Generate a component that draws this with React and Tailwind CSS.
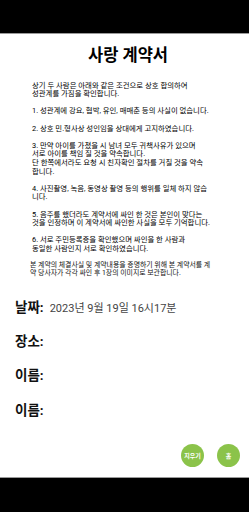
const FONT = { fontFamily: 'Roboto, "Noto Sans CJK KR", sans-serif' }

// each paragraph is a list of lines, broken where the screenshot breaks them
const CLAUSES = [
  ['상기 두 사람은 아래와 같은 조건으로 상호 합의하여', '성관계를 가짐을 확인합니다.'],
  ['1. 성관계에 강요, 협박, 유인, 매매춘 등의 사실이 없습니다.'],
  ['2. 상호 민.형사상 성인임을 상대에게 고지하였습니다.'],
  [
    '3. 만약 아이를 가졌을 시 남녀 모두 귀책사유가 있으며',
    '서로 아이를 책임 질 것을 약속합니다.',
    '단 한쪽에서라도 요청 시 친자확인 절차를 거칠 것을 약속',
    '합니다.',
  ],
  ['4. 사진촬영, 녹음, 동영상 촬영 등의 행위를 일체 하지 않습', '니다.'],
  ['5. 음주를 했더라도 계약서에 싸인 한 것은 본인이 맞다는', '것을 인정하며 이 계약서에 싸인한 사실을 모두 기억합니다.'],
  ['6. 서로 주민등록증을 확인했으며 싸인을 한 사람과', '동일한 사람인지 서로 확인하였습니다.'],
]

const NOTE = [
  '본 계약의 체결사실 및 계약내용을 증명하기 위해 본 계약서를 계',
  '약 당사자가 각각 싸인 후 1장의 이미지로 보관합니다.',
]

const Field = ({ label, value }) => (
  <div className="flex items-baseline h-[18px] leading-[18px]">
    <span className="text-[13.5px] font-bold text-[#111]">{label}</span>
    {value && <span className="ml-[6px] text-[11px] text-[#444]">{value}</span>}
  </div>
)

const RoundButton = ({ children }) => (
  <button className="w-[23px] h-[23px] rounded-full bg-[#8bc34a] text-white text-[6px] font-bold flex items-center justify-center">
    {children}
  </button>
)

export default function App() {
  return (
    <div className="w-[249px] h-[512px] flex flex-col bg-white overflow-hidden" style={FONT}>
      {/* status bar */}
      <div className="h-[34px] bg-black border-b border-[#9a9a9a] shrink-0" />

      <div className="flex-1 flex flex-col">
        <div className="ml-[32px] w-[192px]">
          <h1 className="mt-[12px] text-center text-[16.5px] leading-[20px] font-bold text-black">사랑 계약서</h1>

          <div className="mt-[15.7px] text-[7.4px] leading-[8.6px] text-black whitespace-nowrap">
            {CLAUSES.map((para, i) => (
              <div key={i} className={i > 0 ? 'mt-[8.6px]' : ''}>
                {para.map((line, j) => (
                  <div key={j}>{line}</div>
                ))}
              </div>
            ))}
          </div>

          <div className="mt-[7.4px] -ml-[2px] text-[6.9px] leading-[8.4px] text-[#111] whitespace-nowrap">
            {NOTE.map((line, j) => (
              <div key={j}>{line}</div>
            ))}
          </div>
        </div>

        {/* fields */}
        <div className="mt-[20px] ml-[15px] flex flex-col gap-[16.3px]">
          <Field label="날짜:" value="2023년 9월 19일 16시17분" />
          <Field label="장소:" />
          <Field label="이름:" />
          <Field label="이름:" />
        </div>

        {/* actions */}
        <div className="mt-auto mb-[10px] mr-[9px] flex justify-end gap-[13px]">
          <RoundButton>지우기</RoundButton>
          <RoundButton>홈</RoundButton>
        </div>
      </div>

      {/* nav bar */}
      <div className="h-[35px] bg-black border-t border-[#9a9a9a] shrink-0" />
    </div>
  )
}
